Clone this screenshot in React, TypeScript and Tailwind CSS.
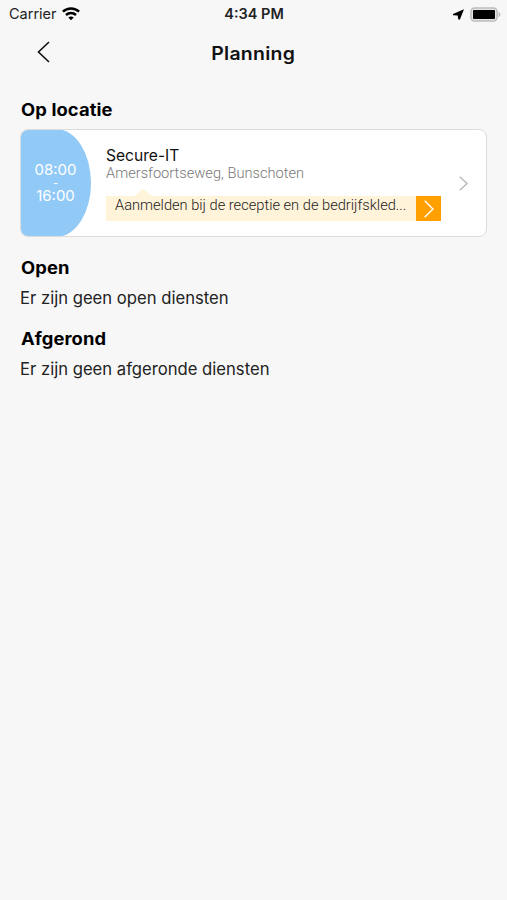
import type { ReactNode } from 'react'

function StatusBar() {
  return (
    <header className="grid h-7 grid-cols-3 items-center pl-[9px] pr-[8px] text-[14.5px] leading-7 text-[#222]">
      <div className="flex items-center gap-[5px]">
        <span>Carrier</span>
        <svg className="h-[14px] w-[18px]" viewBox="0 0 18 14" fill="none" stroke="#000" strokeWidth="2.5">
          <path d="M.9 4.7C5.4.4 12.6.4 17.1 4.7" />
          <path d="M4 8c2.8-2.6 7.2-2.6 10 0" />
          <path d="M6.3 10.5L9 13.2l2.7-2.7c-1.5-1.4-3.9-1.4-5.4 0z" fill="#000" stroke="none" />
        </svg>
      </div>
      <span className="text-center text-[14.5px] font-semibold">4:34 PM</span>
      <div className="flex items-center justify-end gap-[6px]">
        <svg className="h-[11px] w-[11px]" viewBox="0 0 11 11">
          <path d="M11 .3L6.8 10.8 5.2 10.3 4.7 6.6 0 6.2V5z" fill="#000" />
        </svg>
        <svg className="-mr-[2px] h-[15px] w-[31px]" viewBox="0 0 31 15">
          <rect x="1" y="1" width="26" height="13" rx="3.5" fill="#e4e4e4" stroke="#bdbdbd" strokeWidth="1.6" />
          <rect x="3" y="3" width="22" height="9" rx="1" fill="#000" />
          <path d="M28.5 4.8c2.6 1.2 2.6 4.2 0 5.4z" fill="#bdbdbd" />
        </svg>
      </div>
    </header>
  )
}

function NavBar() {
  return (
    <nav className="grid h-12 grid-cols-3 items-center px-[37px]">
      <button aria-label="Terug" className="justify-self-start">
        <svg className="h-[22px] w-[13px]" viewBox="0 0 13 22" fill="none" stroke="#111" strokeWidth="1.6">
          <path d="M12 1L1.5 11 12 21" />
        </svg>
      </button>
      <h1 className="scale-x-108 pt-[2px] text-center text-[18px] font-semibold tracking-[0.25px] text-[#111]">Planning</h1>
    </nav>
  )
}

function SectionTitle({ children }: { children: ReactNode }) {
  return (
    <h2 className="origin-left scale-x-108 text-[17px] font-bold leading-6 tracking-[0.1px] text-black">{children}</h2>
  )
}

function ShiftCard() {
  return (
    <article className="-ml-px mt-[7px] flex h-[108px] items-stretch overflow-hidden rounded-[8px] border border-[#dcdcdc] bg-white">
      <div className="-my-px -ml-px flex w-[71px] flex-col items-center justify-center bg-[#91c9f7] text-[15px] text-white [border-radius:0_35px_35px_0/0_54px_54px_0]">
        <span className="leading-[18px]">08:00</span>
        <span className="h-[8px] text-[10px] font-semibold leading-[8px]">-</span>
        <span className="leading-[18px]">16:00</span>
      </div>
      <div className="ml-[15px] w-[335px] pt-[16px]">
        <h3 className="text-[15.6px] leading-[19px] text-[#111]">Secure-IT</h3>
        <p className="font-[Roboto] text-[14.65px] font-light leading-[17px] text-[#777]">Amersfoortseweg, Bunschoten</p>
        <svg className="ml-[28px] mt-[7px] h-[7px] w-[18px]" viewBox="0 0 18 7">
          <path d="M0 7l9-7 9 7z" fill="#fff3d9" />
        </svg>
        <div className="flex h-[25px] bg-[#fff3d9]">
          <p className="w-[310px] whitespace-nowrap pl-[9px] font-[Roboto] text-[14.65px] font-light leading-[19px] text-[#222]">
            Aanmelden bij de receptie en de bedrijfskled...
          </p>
          <div className="flex w-[25px] shrink-0 items-center justify-center bg-[#ffa000]">
            <svg className="h-[18px] w-[10px]" viewBox="0 0 10 18" fill="none" stroke="#fff" strokeWidth="1.4">
              <path d="M.7.8L9 9 .7 17.2" />
            </svg>
          </div>
        </div>
      </div>
      <svg className="ml-[18px] h-[15px] w-[9px] self-center" viewBox="0 0 9 15" fill="none" stroke="#b8b8b8" strokeWidth="1.4">
        <path d="M.8.8L8 7.5.8 14.2" />
      </svg>
    </article>
  )
}

function EmptySection({ title, message }: { title: string; message: string }) {
  return (
    <section>
      <SectionTitle>{title}</SectionTitle>
      <p className="-ml-px mt-[6px] text-[16.65px] leading-6 text-[#222]">{message}</p>
    </section>
  )
}

export default function App() {
  return (
    <div className="min-h-screen overflow-x-hidden bg-[#f7f7f7] font-[Inter,sans-serif]">
      <StatusBar />
      <NavBar />
      <main className="flex flex-col pl-[21px] pr-5 pt-[22px]">
        <section className="mb-[19px]">
          <SectionTitle>Op locatie</SectionTitle>
          <ShiftCard />
        </section>
        <div className="flex flex-col gap-[17px]">
          <EmptySection title="Open" message="Er zijn geen open diensten" />
          <EmptySection title="Afgerond" message="Er zijn geen afgeronde diensten" />
        </div>
      </main>
    </div>
  )
}
